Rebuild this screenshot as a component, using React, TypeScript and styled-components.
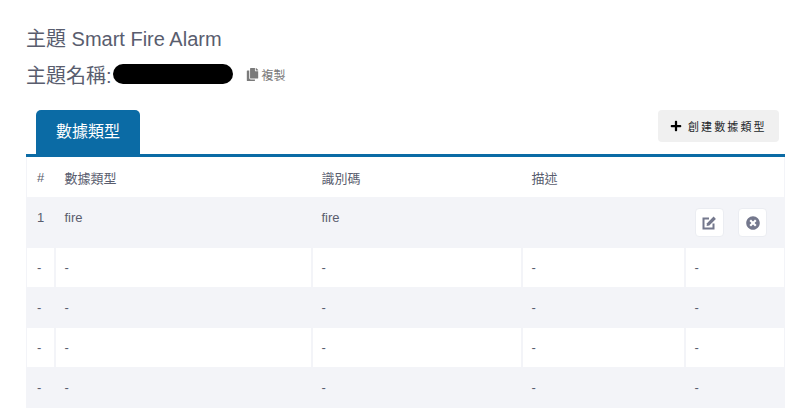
import { createGlobalStyle, styled } from "styled-components";
import { FaPlus, FaTimesCircle, FaCopy } from "react-icons/fa";

const GlobalStyle = createGlobalStyle`
  html, body {
    margin: 0;
    padding: 0;
    background: #fff;
    font-family: "Liberation Sans", "Noto Sans CJK TC", Arial, sans-serif;
  }
`;

const Page = styled.div`
  width: 798px;
  height: 419px;
  padding: 27px 13px 0 26px;
  box-sizing: border-box;
  overflow: hidden;
  color: #595d6e;
`;

const Title = styled.h3`
  margin: 0;
  font-size: 20px;
  line-height: 24px;
  font-weight: 400;
  color: #595d6e;
`;

const NameRow = styled.div`
  display: flex;
  align-items: center;
  height: 24px;
  margin-top: 11px;
  font-size: 20px;
`;

const Redacted = styled.span`
  width: 120px;
  height: 20px;
  margin-left: 1px;
  border-radius: 10px;
  background: #000;
`;

const CopyLink = styled.span`
  display: flex;
  align-items: center;
  gap: 3px;
  margin-left: 13px;
  font-size: 12px;
  color: #7a7a7a;
`;

const TabBar = styled.div`
  display: flex;
  align-items: flex-start;
  justify-content: space-between;
  height: 44px;
  margin-top: 24px;
  border-bottom: 3px solid #0b6ba5;
`;

const Tab = styled.div`
  width: 104px;
  height: 44px;
  margin-left: 10px;
  border-radius: 5px 5px 0 0;
  background: #0b6ba5;
  color: #fff;
  font-size: 16px;
  line-height: 44px;
  text-align: center;
`;

const CreateButton = styled.button`
  display: flex;
  align-items: center;
  gap: 6px;
  width: 121px;
  height: 32px;
  margin: 0 6px 0 0;
  padding: 0 0 0 12px;
  box-sizing: border-box;
  border: 0;
  border-radius: 4px;
  background: #f0f0f0;
  color: #212529;
  font-family: inherit;
  font-size: 11px;
  letter-spacing: 2.1px;
`;

const Table = styled.table`
  width: 759px;
  border-collapse: collapse;
  table-layout: fixed;
  font-size: 13px;
  border-left: 1px solid #f3f4f8;
  border-right: 1px solid #f3f4f8;
`;

const Row = styled.tr<{ $striped?: boolean; $height: number }>`
  height: ${(p) => p.$height}px;
  background: ${(p) => (p.$striped ? "#f3f4f8" : "#fff")};
`;

const HeadCell = styled.th`
  padding: 0 0 0 10px;
  font-weight: 400;
  font-size: 13px;
  text-align: left;
  color: #595d6e;
`;

const Cell = styled.td<{ $top?: boolean; $ruled?: boolean }>`
  padding: ${(p) => (p.$top ? "13px 0 0 10px" : p.$ruled ? "0 0 0 9px" : "0 0 0 10px")};
  vertical-align: ${(p) => (p.$top ? "top" : "middle")};
  border-left: ${(p) => (p.$ruled ? "2px solid #f3f4f8" : "0")};
  color: #595d6e;
`;

const Actions = styled.div`
  display: flex;
  justify-content: flex-end;
  gap: 14px;
  margin: -2px 17px 0 0;
`;

const IconButton = styled.button`
  display: flex;
  align-items: center;
  justify-content: center;
  flex: none;
  width: 29px;
  height: 29px;
  padding: 0;
  border: 1px solid #ebedf2;
  border-radius: 4px;
  background: #fff;
  color: #74788d;
`;

const EditIcon = () => (
  <svg width="15" height="15" viewBox="0 0 15 15" fill="none" aria-hidden="true">
    <path d="M11.5 8.5V13.5H1.5V3.5H7" stroke="currentColor" strokeWidth="2" />
    <path d="M5 8.2L11.6 1.6L13.9 3.9L7.3 10.5L4.6 10.9Z" fill="currentColor" />
  </svg>
);

const emptyRows = [false, true, false, true];

export default function App() {
  return (
    <Page>
      <GlobalStyle />
      <Title>主題 Smart Fire Alarm</Title>
      <NameRow>
        主題名稱:
        <Redacted />
        <CopyLink>
          <FaCopy size={13} />
          複製
        </CopyLink>
      </NameRow>
      <TabBar>
        <Tab>數據類型</Tab>
        <CreateButton>
          <FaPlus size={12} color="#000" />
          創建數據類型
        </CreateButton>
      </TabBar>
      <Table>
        <colgroup>
          <col style={{ width: 28 }} />
          <col style={{ width: 257 }} />
          <col style={{ width: 210 }} />
          <col style={{ width: 163 }} />
          <col />
        </colgroup>
        <tbody>
          <Row $height={40}>
            <HeadCell>#</HeadCell>
            <HeadCell>數據類型</HeadCell>
            <HeadCell>識別碼</HeadCell>
            <HeadCell>描述</HeadCell>
            <HeadCell />
          </Row>
          <Row $striped $height={51}>
            <Cell $top>1</Cell>
            <Cell $top>fire</Cell>
            <Cell $top>fire</Cell>
            <Cell $top />
            <Cell $top>
              <Actions>
                <IconButton>
                  <EditIcon />
                </IconButton>
                <IconButton>
                  <FaTimesCircle size={14} />
                </IconButton>
              </Actions>
            </Cell>
          </Row>
          {emptyRows.map((striped, i) => (
            <Row key={i} $striped={striped} $height={striped ? 41 : 39}>
              <Cell>-</Cell>
              <Cell $ruled={!striped}>-</Cell>
              <Cell $ruled={!striped}>-</Cell>
              <Cell $ruled={!striped}>-</Cell>
              <Cell $ruled={!striped}>-</Cell>
            </Row>
          ))}
        </tbody>
      </Table>
    </Page>
  );
}
